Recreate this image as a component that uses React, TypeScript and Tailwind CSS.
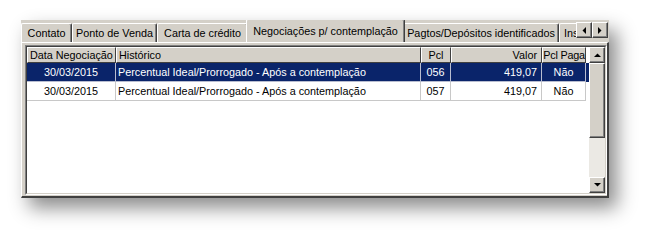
import React from 'react';

const FONT = { fontFamily: '"Liberation Sans", Arial, sans-serif' };

const COLS = [
  { label: 'Data Negociação', w: 'w-[89px]', head: 'justify-start pl-[2px]', cell: 'justify-center' },
  { label: 'Histórico', w: 'w-[305px]', head: 'justify-start pl-[2px]', cell: 'justify-start pl-[2px]' },
  { label: 'Pcl', w: 'w-[30px]', head: 'justify-center', cell: 'justify-center' },
  { label: 'Valor', w: 'w-[91px]', head: 'justify-end pr-[4px]', cell: 'justify-end pr-[4px]' },
  { label: 'Pcl Paga', w: 'w-[44px]', head: 'justify-center tracking-[-0.2px]', cell: 'justify-center' },
];

const ROWS = [
  ['30/03/2015', 'Percentual Ideal/Prorrogado - Após a contemplação', '056', '419,07', 'Não'],
  ['30/03/2015', 'Percentual Ideal/Prorrogado - Após a contemplação', '057', '419,07', 'Não'],
];

const TABS = [
  { label: 'Contato', w: 'w-[51px] justify-center' },
  { label: 'Ponto de Venda', w: 'w-[85px] justify-center' },
  { label: 'Carta de crédito', w: 'w-[91px] justify-center' },
  { label: 'Negociações p/ contemplação', w: 'w-[153px] justify-center', active: true },
  { label: 'Pagtos/Depósitos identificados', w: 'w-[156px] justify-center' },
  { label: 'Inst', w: 'w-[60px] justify-start pl-[4px]' },
];

function Raised({ className, children }: { className?: string; children?: React.ReactNode }) {
  return (
    <div className={`bg-[#d4d0c8] border-t border-l border-[#ffffff] border-r border-b border-r-[#404040] border-b-[#404040] shadow-[inset_-1px_-1px_0_#808080] flex items-center justify-center ${className ?? ''}`}>
      {children}
    </div>
  );
}

function Triangle({ dir }: { dir: 'up' | 'down' | 'left' | 'right' }) {
  const pts = {
    up: '0,4 7,4 3.5,0.5',
    down: '0,0 7,0 3.5,3.5',
    left: '4,0 4,7 0.5,3.5',
    right: '0,0 0,7 3.5,3.5',
  }[dir];
  const vertical = dir === 'up' || dir === 'down';
  return (
    <svg width={vertical ? 7 : 4} height={vertical ? 4 : 7} viewBox={vertical ? '0 0 7 4' : '0 0 4 7'}>
      <polygon points={pts} fill="#000" />
    </svg>
  );
}

export default function App() {
  return (
    <div className="w-[652px] h-[240px] bg-white pl-[21px] pt-[20px] text-[10.8px] text-black" style={FONT}>
      <div className="w-[588px] h-[178px] bg-[#d4d0c8] flex flex-col shadow-[8px_10px_18px_rgba(0,0,0,0.45)]">
        {/* tab strip */}
        <div className="h-[22px] flex items-end relative">
          <div className="flex-1 min-w-0 flex items-end overflow-hidden h-[22px]">
            {TABS.map(t => (
              <div
                key={t.label}
                className={`shrink-0 flex items-center whitespace-nowrap bg-[#d4d0c8] border-t border-l border-white border-r border-r-[#404040] rounded-t-[2px] shadow-[inset_-1px_0_0_#808080] ${t.w} ${
                  t.active ? 'h-[22px] -mx-[2px] px-[2px] box-content relative z-10 pb-[1px] -mb-[1px]' : 'h-[19px] pt-[1px]'
                }`}
              >
                {t.label}
              </div>
            ))}
          </div>
          <div className="flex self-start mt-[2px] mr-[1px]">
            <Raised className="w-[16px] h-[16px]"><Triangle dir="left" /></Raised>
            <Raised className="w-[16px] h-[16px]"><Triangle dir="right" /></Raised>
          </div>
        </div>

        {/* page body */}
        <div className="flex-1 min-h-0 border-t border-l border-white border-r-2 border-b-2 border-r-[#404040] border-b-[#404040] pt-[2px] pl-[3px]">
          <div className="h-[150px] w-[582px] border-t border-l border-[#808080] border-r border-b border-r-white border-b-white">
            <div className="h-full border-t border-l border-[#404040] border-r border-b border-r-[#d4d0c8] border-b-[#d4d0c8] bg-white flex">
              <div className="flex-1 min-w-0">
                <div className="flex h-[16px]">
                  {COLS.map(c => (
                    <div
                      key={c.label}
                      className={`${c.w} shrink-0 flex items-center whitespace-nowrap overflow-hidden bg-[#d4d0c8] border-t border-l border-white border-r border-b border-r-[#404040] border-b-[#404040] ${c.head}`}
                    >
                      {c.label}
                    </div>
                  ))}
                </div>
                {ROWS.map((r, i) => (
                  <div key={i} className={`flex h-[19px] ${i === 0 ? 'bg-[#0a246a] text-white' : 'bg-white text-black'}`}>
                    {r.map((v, j) => (
                      <div
                        key={j}
                        className={`${COLS[j].w} shrink-0 flex items-center whitespace-nowrap border-r border-b ${i === 0 ? 'border-[#b8bdd0]' : 'border-[#c8c8c8]'} ${COLS[j].cell}`}
                      >
                        {v}
                      </div>
                    ))}
                  </div>
                ))}
              </div>
              {/* vertical scrollbar */}
              <div className="w-[16px] flex flex-col bg-[#ebe9e4]">
                <Raised className="h-[16px]"><Triangle dir="up" /></Raised>
                <Raised className="h-[75px]" />
                <div className="flex-1" />
                <Raised className="h-[16px]"><Triangle dir="down" /></Raised>
              </div>
            </div>
          </div>
        </div>
      </div>
    </div>
  );
}
